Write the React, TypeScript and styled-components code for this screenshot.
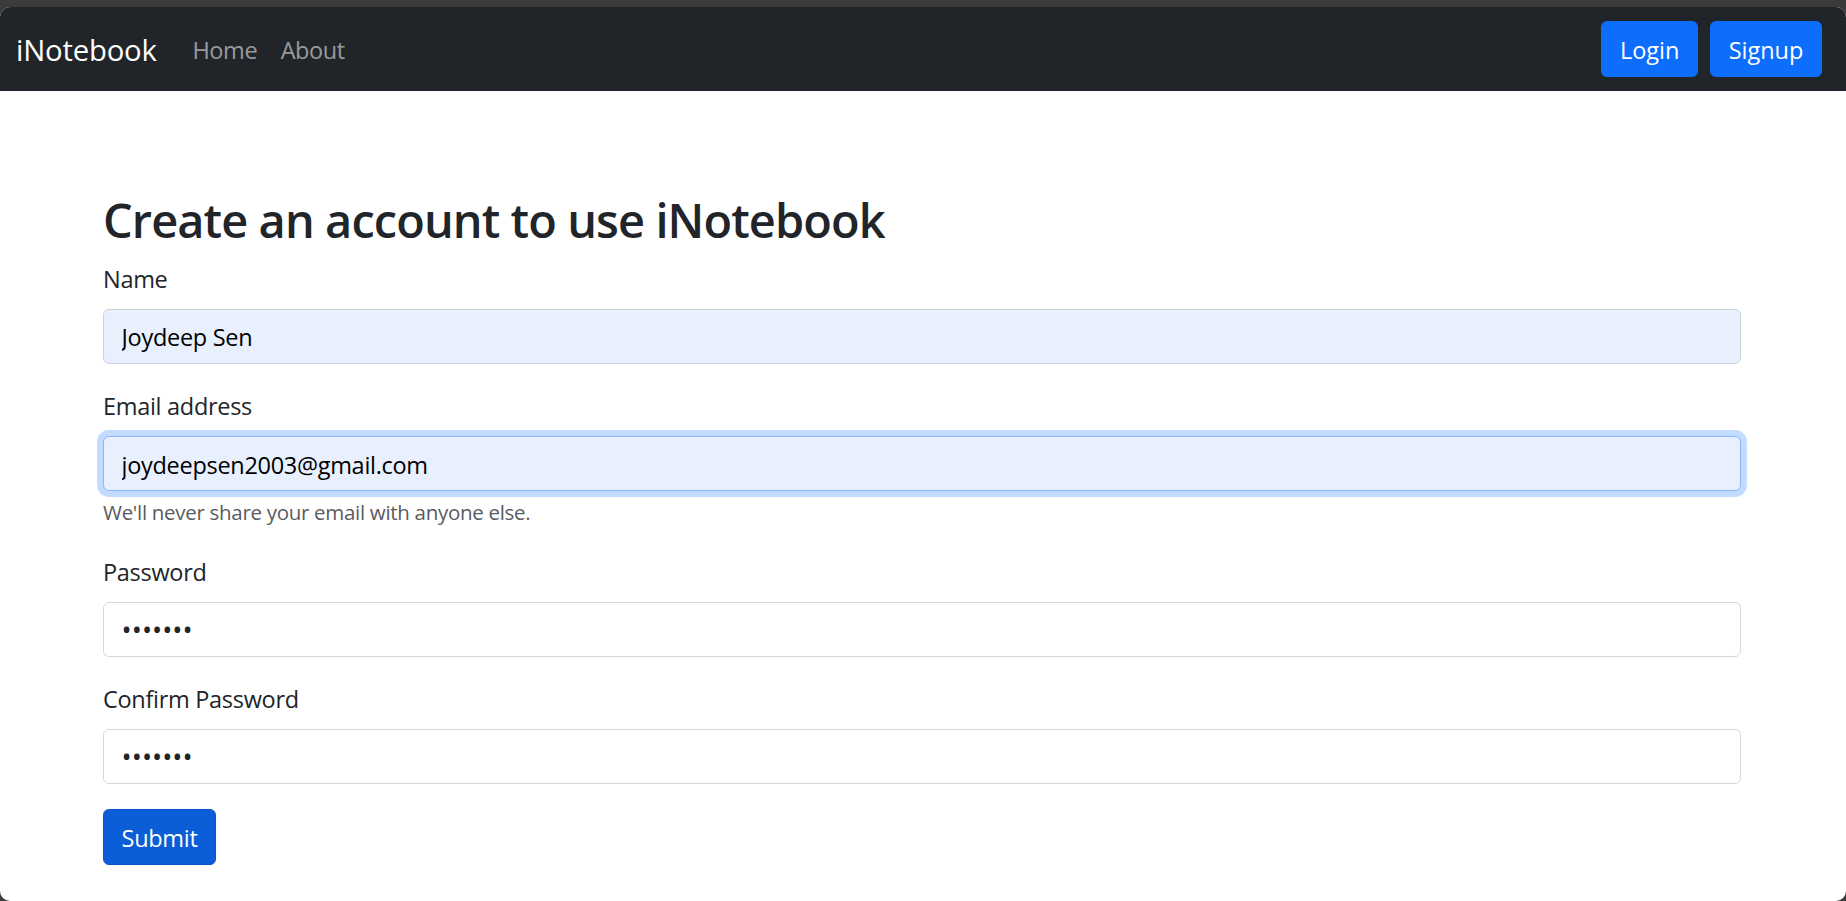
import React from "react";
import styled, { createGlobalStyle, css } from "styled-components";

const GlobalStyle = createGlobalStyle`
  html, body {
    margin: 0;
    padding: 0;
    background: #3b3b3b;
  }
  body {
    font-family: "Open Sans", "Noto Sans", "Liberation Sans", sans-serif;
    color: #212529;
  }
  * { box-sizing: border-box; }
`;

const Window = styled.div`
  margin-top: 7px;
  height: 894px;
  background: #ffffff;
  border-radius: 10px;
  overflow: hidden;
  display: flex;
  flex-direction: column;
`;

const NavBar = styled.nav`
  height: 84px;
  flex: 0 0 84px;
  background: #212529;
  display: flex;
  align-items: center;
  padding: 0 24px 0 16px;
`;

const Brand = styled.a`
  font-size: 29.3px;
  color: #ffffff;
  text-decoration: none;
  margin-right: 24px;
  line-height: 1.5;
  padding-top: 4px;
  letter-spacing: -0.2px;
`;

const NavLinks = styled.div`
  display: flex;
  align-items: center;
  padding-top: 4px;
`;

const NavLink = styled.a`
  font-size: 23.5px;
  color: rgba(255, 255, 255, 0.55);
  text-decoration: none;
  padding: 0 11.7px;
  line-height: 1.5;
  letter-spacing: -0.4px;
`;

const NavActions = styled.div`
  margin-left: auto;
  display: flex;
  gap: 12px;
`;

const Button = styled.button<{ $dark?: boolean }>`
  height: 55.5px;
  padding: 3px 17.6px 0;
  font-family: inherit;
  font-size: 23.5px;
  color: #ffffff;
  background: ${(p) => (p.$dark ? "#0b5ed7" : "#0d6efd")};
  border: 1px solid ${(p) => (p.$dark ? "#0a58ca" : "#0d6efd")};
  border-radius: 5.9px;
  cursor: pointer;
  line-height: 1.5;
  letter-spacing: ${(p) => (p.$dark ? "-0.3px" : "0")};
`;

const Main = styled.main`
  padding: 0 0 0 103px;
`;

const Container = styled.div`
  width: 1638px;
`;

const Heading = styled.h2`
  margin: 101px 0 13.7px;
  font-size: 46.9px;
  font-weight: 600;
  line-height: 56.3px;
  letter-spacing: -0.9px;
`;

const Field = styled.div<{ $gap?: number }>`
  margin-bottom: ${(p) => p.$gap ?? 25.5}px;
`;

const Label = styled.label`
  display: block;
  font-size: 23.5px;
  line-height: 35.2px;
  margin-bottom: 11.7px;
  letter-spacing: -0.3px;
`;

const Input = styled.input<{ $autofill?: boolean; $focused?: boolean }>`
  display: block;
  width: 100%;
  height: 55px;
  padding: 2px 17.6px 0;
  font-family: inherit;
  font-size: 23.5px;
  letter-spacing: -0.3px;
  color: #212529;
  background: #ffffff;
  border: 1px solid #d3d8de;
  border-radius: 5.9px;
  outline: none;
  &[type="password"] {
    font-size: 27px;
    letter-spacing: 0;
    padding-top: 0;
  }
  ${(p) =>
    p.$autofill &&
    css`
      background: #e8f0fe;
      color: #000000;
      border-color: #ccd2da;
    `}
  ${(p) =>
    p.$focused &&
    css`
      border-color: #86b7fe;
      box-shadow: 0 0 0 5.9px rgba(13, 110, 253, 0.25);
    `}
`;

const HelpText = styled.div`
  margin-top: 5.9px;
  font-size: 20.5px;
  line-height: 30.8px;
  color: #595c5f;
  letter-spacing: -0.3px;
`;

export default function App() {
  return (
    <>
      <GlobalStyle />
      <Window>
        <NavBar>
          <Brand href="#">iNotebook</Brand>
          <NavLinks>
            <NavLink href="#">Home</NavLink>
            <NavLink href="#">About</NavLink>
          </NavLinks>
          <NavActions>
            <Button>Login</Button>
            <Button>Signup</Button>
          </NavActions>
        </NavBar>
        <Main>
          <Container>
            <Heading>Create an account to use iNotebook</Heading>
            <Field>
              <Label htmlFor="name">Name</Label>
              <Input id="name" type="text" readOnly value="Joydeep Sen" $autofill />
            </Field>
            <Field $gap={27}>
              <Label htmlFor="email">Email address</Label>
              <Input
                id="email"
                type="email"
                readOnly
                value="joydeepsen2003@gmail.com"
                $autofill
                $focused
              />
              <HelpText>We'll never share your email with anyone else.</HelpText>
            </Field>
            <Field>
              <Label htmlFor="password">Password</Label>
              <Input id="password" type="password" readOnly value="1234567" />
            </Field>
            <Field $gap={25}>
              <Label htmlFor="cpassword">Confirm Password</Label>
              <Input id="cpassword" type="password" readOnly value="1234567" />
            </Field>
            <Button $dark>Submit</Button>
          </Container>
        </Main>
      </Window>
    </>
  );
}
